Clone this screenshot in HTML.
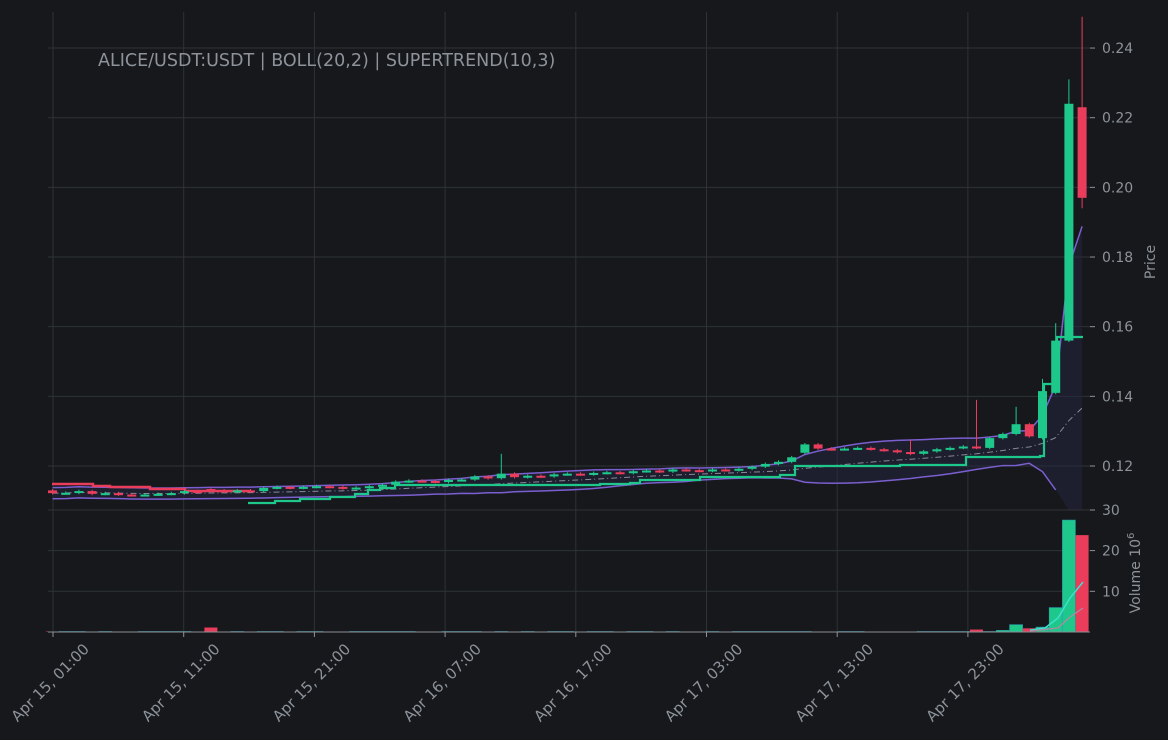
<!DOCTYPE html><html><head><style>body{margin:0;background:#16181c;width:1168px;height:740px;overflow:hidden}svg{display:block;font-family:"DejaVu Sans","Liberation Sans",sans-serif}</style></head><body>
<svg id="s" width="1168" height="740" xmlns="http://www.w3.org/2000/svg">
<rect width="1168" height="740" fill="#16181c"/>
<g id="grid" stroke="#2d3336" stroke-width="1"></g>
<g id="plot"></g>
<line x1="48" y1="632" x2="1090" y2="632" stroke="#8a8f96" stroke-width="1"/>
<line x1="48" y1="510" x2="1090" y2="510" stroke="#2d3336"/>
<text x="98" y="66" fill="#8d939a" font-size="17.5">ALICE/USDT:USDT | BOLL(20,2) | SUPERTREND(10,3)</text>
<g fill="#8d939a" font-size="14" id="ax"></g>
<text transform="translate(1155,262) rotate(-90)" fill="#8d939a" font-size="14" text-anchor="middle">Price</text>
<text transform="translate(1140,573) rotate(-90)" fill="#8d939a" font-size="14" text-anchor="middle">Volume  10<tspan dy="-6" font-size="10">6</tspan></text>
</svg>
<script>
var NS="http://www.w3.org/2000/svg",G=document.getElementById('grid'),P=document.getElementById('plot'),A=document.getElementById('ax');
function el(p,t,a,tx){var e=document.createElementNS(NS,t);for(var k in a)e.setAttribute(k,a[k]);if(tx)e.textContent=tx;p.appendChild(e);return e}
function Y(p){return 466-(p-0.12)*3483}
function VY(v){return 632-v*4.07}
[0.24,0.22,0.20,0.18,0.16,0.14,0.12].forEach(function(p){var y=Y(p);el(G,'line',{x1:48,x2:1090,y1:y,y2:y});el(A,'line',{x1:1090,x2:1095,y1:y,y2:y,stroke:'#8d939a'});el(A,'text',{x:1102,y:y+5},p.toFixed(2))});
[10,20].forEach(function(v){var y=VY(v);el(G,'line',{x1:48,x2:1090,y1:y,y2:y});el(A,'line',{x1:1090,x2:1095,y1:y,y2:y,stroke:'#8d939a'});el(A,'text',{x:1102,y:y+5},v)});
el(A,'line',{x1:1090,x2:1095,y1:510,y2:510,stroke:'#8d939a'});el(A,'text',{x:1102,y:515},'30');
var labs=["Apr 15, 01:00","Apr 15, 11:00","Apr 15, 21:00","Apr 16, 07:00","Apr 16, 17:00","Apr 17, 03:00","Apr 17, 13:00","Apr 17, 23:00"];
labs.forEach(function(l,i){var x=53+i*130.7;el(G,'line',{x1:x,x2:x,y1:12,y2:632});el(A,'line',{x1:x,x2:x,y1:632,y2:637,stroke:'#8d939a'});el(A,'text',{transform:'translate('+(x+37)+',650) rotate(-45)','text-anchor':'end','font-size':15},l)});
var C=[0.1122,0.1123,0.1128,0.1120,0.1122,0.1118,0.1117,0.1118,0.1120,0.1122,0.1128,0.1124,0.1130,0.1126,0.1130,0.1128,0.1137,0.1140,0.1137,0.1140,0.1142,0.1140,0.1136,0.1138,0.1142,0.1146,0.1155,0.1158,0.1157,0.1154,0.1160,0.1161,0.1170,0.1165,0.1178,0.1168,0.1172,0.1170,0.1176,0.1178,0.1176,0.1180,0.1182,0.1180,0.1185,0.1187,0.1184,0.1190,0.1188,0.1186,0.1190,0.1188,0.1192,0.1198,0.1206,0.1212,0.1225,0.1262,0.1250,0.1248,0.1250,0.1252,0.1248,0.1245,0.1240,0.1235,0.1242,0.1248,0.1252,0.1256,0.1252,0.1280,0.1292,0.1320,0.1285,0.1415,0.1560,0.2240,0.1970];
var O=[0.1130],H=[],L=[],i;for(i=1;i<C.length;i++)O.push(C[i-1]);
O[75]=0.1280;O[76]=0.1410;O[77]=0.1560;O[78]=0.2230;O[74]=0.1320;O[57]=0.1238;O[12]=0.1134;
for(i=0;i<C.length;i++){H.push(Math.max(O[i],C[i])+0.0004);L.push(Math.min(O[i],C[i])-0.0004)}
H[34]=0.1235;H[70]=0.139;H[73]=0.137;H[75]=0.145;H[76]=0.161;H[77]=0.231;H[78]=0.249;L[78]=0.194;H[65]=0.1275;
function X(i){return 52.5+i*13.2}
var n=C.length,mid=[],up=[],lo=[];
for(i=0;i<n;i++){var s=Math.max(0,i-19),a=C.slice(s,i+1),m=a.reduce(function(x,y){return x+y})/a.length,v=Math.sqrt(a.reduce(function(x,y){return x+(y-m)*(y-m)},0)/a.length);v=Math.max(v,0.0008);mid.push(m);up.push(m+2*v);lo.push(m-2*v)}
function cl(y){return Math.min(510,Math.max(12,y))}
var fp='';for(i=0;i<n;i++)fp+=(i?'L':'M')+X(i)+','+cl(Y(up[i]));for(i=n-1;i>=0;i--)fp+='L'+X(i)+','+cl(Y(lo[i]));
el(P,'path',{d:fp+'Z',fill:'#252740',opacity:0.55});
function line(arr,attrs){var d='';arr.forEach(function(p,i){if(Y(p)>510)return;d+=(d?'L':'M')+X(i)+','+Y(p)});attrs.d=d;attrs.fill='none';el(P,'path',attrs)}
line(up,{stroke:'#7b5fcf','stroke-width':1.5});line(lo,{stroke:'#7b5fcf','stroke-width':1.5});line(mid,{stroke:'#8a8a99','stroke-width':1,'stroke-dasharray':'6,3,1,3'});
el(P,'path',{d:'M52,484 L93,484 L93,486 L110,486 L110,487 L150,487 L150,489 L185,489 L185,491 L250,491',fill:'none',stroke:'#ea3d5c','stroke-width':2.5});
var g=[[248,503],[275,501],[300,499],[330,497],[355,494],[368,490],[380,488],[395,485],[480,485],[560,485],[600,484],[630,483],[640,480],[700,477],[780,475],[795,466],[900,465],[966,465],[966,457],[1040,456],[1044,454],[1044,384],[1057,384],[1057,337],[1083,337]];
var sd='M'+g[0][0]+','+g[0][1];for(i=1;i<g.length;i++){sd+='L'+g[i][0]+','+g[i-1][1]+'L'+g[i][0]+','+g[i][1]}
el(P,'path',{d:sd,fill:'none',stroke:'#1ec88a','stroke-width':2.2});
var V=[];for(i=0;i<n;i++)V.push(0.12);V[12]=1.1;V[70]=0.6;V[72]=0.4;V[73]=1.8;V[74]=0.9;V[75]=1.2;V[76]=6.0;V[77]=27.5;V[78]=23.8;
for(i=0;i<n;i++){var u=C[i]>=O[i],col=u?'#1ec88a':'#ea3d5c',x=X(i);
el(P,'line',{x1:x,x2:x,y1:Y(H[i]),y2:Y(L[i]),stroke:col,'stroke-width':1});
var t=Y(Math.max(O[i],C[i])),b=Y(Math.min(O[i],C[i]));el(P,'rect',{x:x-4.5,y:t,width:9,height:Math.max(2,b-t),fill:col});
var vy=VY(V[i]);el(P,'rect',{x:x-6.5,y:vy,width:13,height:632-vy,fill:col,stroke:u?'#2a9fb0':'none','stroke-width':0.6})}
el(P,'path',{d:'M1030,630 L1045,628 L1058,618 L1070,598 L1083,582',fill:'none',stroke:'#3de0d0','stroke-width':1.5});
el(P,'path',{d:'M1030,631 L1058,628 L1070,617 L1083,608',fill:'none',stroke:'#b08aa0','stroke-width':1.2});
</script>
</body></html>
